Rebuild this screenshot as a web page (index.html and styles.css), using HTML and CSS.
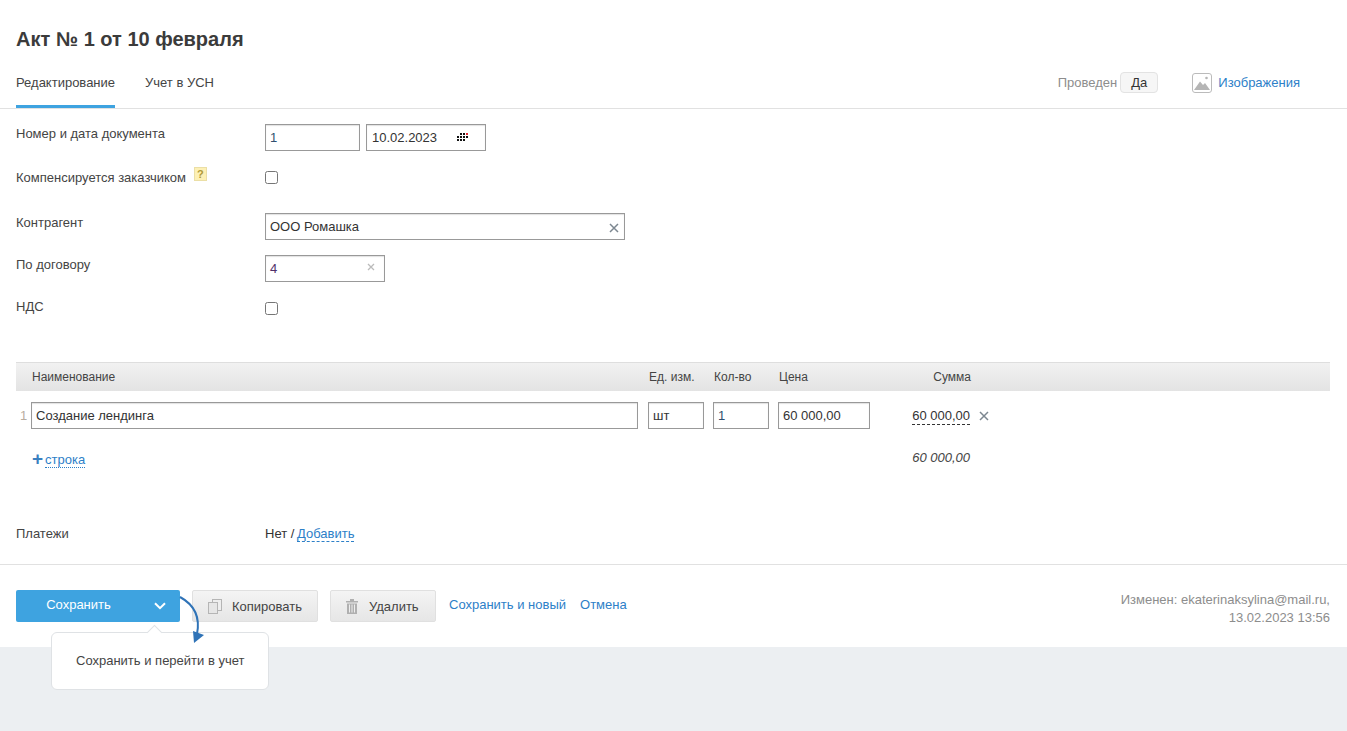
FILE: index.html
```html
<!DOCTYPE html>
<html lang="ru">
<head>
<meta charset="utf-8">
<title>Акт № 1 от 10 февраля</title>
<link rel="stylesheet" href="styles.css">
</head>
<body>
<div class="page">
  <main class="sheet">
    <header class="head">
      <h1 class="title">Акт № 1 от 10 февраля</h1>
      <nav class="tabs">
        <a class="tab tab-active">Редактирование</a>
        <a class="tab">Учет в УСН</a>
        <div class="tabs-right">
          <span class="posted">Проведен</span>
          <span class="pill">Да</span>
          <svg class="img-icon" width="20" height="20" viewBox="0 0 20 20"><rect x=".5" y=".5" width="19" height="19" rx="2.5" fill="#fff" stroke="#bbb"/><path d="M2 17 L8 8.500 L11 12 L13 10 L18 17 Z" fill="#b5b5b5"/><circle cx="14.500" cy="5" r="1.300" fill="#b5b5b5"/></svg>
          <a class="link">Изображения</a>
        </div>
      </nav>
    </header>

    <section class="form">
      <div class="row row-first">
        <div class="label">Номер и дата документа</div>
        <div class="controls">
          <div class="field w-num">1</div>
          <div class="field w-date">10.02.2023
            <svg class="cal" width="11" height="8" viewBox="0 0 11 8"><g fill="#111"><rect x="3" width="2" height="2"/><rect x="6" width="2" height="2"/><rect y="3" width="2" height="2"/><rect x="3" y="3" width="2" height="2"/><rect x="6" y="3" width="2" height="2"/><rect x="9" y="3" width="2" height="2"/><rect y="6" width="2" height="2"/><rect x="3" y="6" width="2" height="2"/><rect x="6" y="6" width="2" height="2"/></g><rect x="9" width="2" height="2" fill="#e3262e"/></svg>
          </div>
        </div>
      </div>
      <div class="row row-check">
        <div class="label label-mid">Компенсируется заказчиком<span class="hint">?</span></div>
        <div class="controls"><input class="check" type="checkbox"></div>
      </div>
      <div class="row row-party">
        <div class="label">Контрагент</div>
        <div class="controls">
          <div class="field w-party">ООО Ромашка
            <svg class="clear" width="10" height="10" viewBox="0 0 10 10"><path d="M1 1 L9 9 M9 1 L1 9" stroke="#7c8790" stroke-width="1.500"/></svg>
          </div>
        </div>
      </div>
      <div class="row row-contract">
        <div class="label">По договору</div>
        <div class="controls">
          <div class="field w-contract">4
            <svg class="clear-small" width="8" height="8" viewBox="0 0 8 8"><path d="M1 1 L7 7 M7 1 L1 7" stroke="#bbb" stroke-width="1.300"/></svg>
          </div>
        </div>
      </div>
      <div class="row row-vat">
        <div class="label label-vat">НДС</div>
        <div class="controls"><input class="check" type="checkbox"></div>
      </div>
    </section>

    <section class="items">
      <div class="items-head">
        <div class="c-name">Наименование</div>
        <div class="c-unit">Ед. изм.</div>
        <div class="c-qty">Кол-во</div>
        <div class="c-price">Цена</div>
        <div class="c-sum">Сумма</div>
      </div>
      <div class="item">
        <div class="item-no">1</div>
        <div class="field w-name">Создание лендинга</div>
        <div class="field w-unit">шт</div>
        <div class="field w-qty">1</div>
        <div class="field w-price">60 000,00</div>
        <div class="item-sum"><span class="dashed">60 000,00</span></div>
        <svg class="item-x" width="10" height="10" viewBox="0 0 10 10"><path d="M1 1 L9 9 M9 1 L1 9" stroke="#7c8790" stroke-width="1.500"/></svg>
      </div>
      <div class="add-row">
        <a class="add"><span class="plus">+</span><span class="dotted">строка</span></a>
        <div class="total">60 000,00</div>
      </div>
    </section>

    <section class="payments">
      <div class="label-pay">Платежи</div>
      <div>Нет / <a class="link link-dashed">Добавить</a></div>
    </section>

    <footer class="foot">
      <div class="save">
        <span class="save-main">Сохранить</span>
        <svg class="chev" width="12" height="8" viewBox="0 0 12 8"><path d="M1 1.200 L6 6.200 L11 1.200" fill="none" stroke="#fff" stroke-width="2"/></svg>
      </div>
      <div class="btn btn-copy">
        <svg width="14" height="15" viewBox="0 0 14 15"><rect x="4.500" y=".5" width="9" height="11" fill="#eee" stroke="#b5b5b5"/><rect x=".5" y="3.500" width="9" height="11" fill="#e6e6e6" stroke="#b5b5b5"/></svg>
        Копировать
      </div>
      <div class="btn btn-del">
        <svg width="12" height="15" viewBox="0 0 12 15"><path d="M0 2h12v1.500H0zM4 0h4v2H4zM1 4.500h10V15H1z" fill="#b0b0b0"/><path d="M3.500 5.500v8M6 5.500v8M8.500 5.500v8" stroke="#eee"/></svg>
        Удалить
      </div>
      <a class="link foot-link">Сохранить и новый</a>
      <a class="link foot-link">Отмена</a>
      <div class="changed">Изменен: ekaterinaksylina@mail.ru,<br>13.02.2023 13:56</div>

      <div class="tip">
        <span class="tip-nub"></span>
        Сохранить и перейти в учет
      </div>
      <svg class="pointer" width="30" height="50" viewBox="0 0 30 50"><path d="M3 1 C14 7 24 18 20 38" fill="none" stroke="#2f73b7" stroke-width="2"/><path d="M16 35 L27 39 L17 47 Z" fill="#2f73b7"/></svg>
    </footer>
  </main>
</div>
</body>
</html>
```

FILE: styles.css
```css
* { box-sizing: border-box; }
html, body { margin: 0; padding: 0; }
body {
  font-family: "Liberation Sans", Arial, sans-serif;
  font-size: 13px;
  color: #333;
  background: #eceff2;
}
.page { min-height: 731px; overflow: hidden; }
.sheet { background: #fff; height: 647px; }

.head { border-bottom: 1px solid #e1e1e1; height: 109px; padding: 27px 0 0 16px; }
.title { margin: 0; font-size: 20px; line-height: 24px; font-weight: 700; color: #3b3b3b; }
.tabs { display: flex; margin-top: 18px; height: 39px; }
.tab { height: 39px; margin-right: 30px; padding-top: 5px; line-height: 18px; color: #444; }
.tab-active { border-bottom: 3px solid #3ea3e0; }
.tabs-right { margin-left: auto; display: flex; align-items: flex-start; padding-right: 47px; }
.posted { color: #8d8d8d; line-height: 18px; margin-top: 5px; margin-right: 3px; }
.pill { height: 21px; margin-top: 3px; padding: 0 10px; line-height: 19px; border: 1px solid #e3e3e3; border-radius: 4px; background: #f6f6f6; color: #333; }
.img-icon { margin: 4px 6px 0 34px; }
.link { color: #2d80c8; text-decoration: none; }
.tabs-right .link { line-height: 18px; margin-top: 5px; }

.form { padding-top: 15px; }
.row { display: flex; height: 27px; }
.row-check { margin-top: 13px; }
.row-party { margin-top: 22px; }
.row-contract { margin-top: 15px; }
.row-vat { margin-top: 13px; }
.label { width: 265px; padding: 1px 0 0 16px; line-height: 18px; color: #444; }
.label-mid { padding-top: 5px; }
.label-vat { padding-top: 3px; }
.controls { display: flex; align-items: center; gap: 6px; }
.hint {
  display: inline-block; width: 13px; height: 14px; margin-left: 8px; position: relative; top: -5px;
  background: #fdf0b5; border: 1px solid #ebdfa6; color: #b09a3a; font-size: 11px; font-weight: 700; line-height: 12px; text-align: center; vertical-align: middle;
}
.check { width: 13px; height: 13px; margin: 0; }

.field {
  position: relative; height: 27px; padding-left: 4px; line-height: 25px;
  border: 1px solid #999; box-shadow: inset 0 1px 1px #e2e2e2; background: #fff; color: #333; flex: none;
}
.w-num { width: 95px; color: #2f4f6f; }
.w-date { width: 120px; padding-left: 5px; }
.w-party { width: 360px; }
.w-contract { width: 120px; color: #50306a; }
.cal { position: absolute; left: 90px; top: 8px; }
.clear { position: absolute; right: 5px; top: 9px; }
.clear-small { position: absolute; right: 9px; top: 7px; }

.items { margin: 40px 17px 0 16px; }
.items-head {
  display: flex; height: 29px; line-height: 28px; font-size: 12px; color: #444;
  border-top: 1px solid #dedede; background: linear-gradient(#f1f1f1, #e3e3e3);
}
.c-name { width: 633px; padding-left: 16px; }
.c-unit { width: 65px; }
.c-qty { width: 65px; }
.c-price { width: 112px; }
.c-sum { width: 80px; text-align: right; }
.item { display: flex; align-items: center; height: 27px; margin-top: 11px; }
.item-no { width: 15px; padding-left: 4px; color: #b8ada0; }
.w-name { width: 607px; }
.w-unit { width: 56px; margin-left: 10px; }
.w-qty { width: 56px; margin-left: 9px; color: #2f4f6f; }
.w-price { width: 92px; margin-left: 9px; }
.item-sum { width: 100px; text-align: right; }
.dashed { border-bottom: 1px dashed #333; padding-bottom: 1px; }
.item-x { margin-left: 9px; }
.add-row { display: flex; margin-top: 21px; height: 20px; }
.add { width: 854px; padding-left: 16px; line-height: 18px; color: #2d80c8; margin-top: 1px; }
.plus { font-size: 19px; font-weight: 700; line-height: 16px; margin-right: 2px; vertical-align: -1px; color: #3a7fc0; }
.dotted { border-bottom: 1px dotted #2d80c8; }
.total { width: 100px; text-align: right; font-style: italic; color: #444; line-height: 16px; }

.payments { display: flex; margin-top: 55px; padding-bottom: 21px; border-bottom: 1px solid #e1e1e1; line-height: 18px; }
.label-pay { width: 265px; padding-left: 16px; color: #444; }
.link-dashed { border-bottom: 1px dashed #2d80c8; margin-left: -1px; }

.foot { position: relative; display: flex; align-items: flex-start; padding: 25px 17px 0 16px; }
.save {
  display: flex; align-items: center; width: 164px; height: 32px; border-radius: 2px; background: #3ea3e0; color: #fff; margin-right: 12px;
}
.save-main { width: 125px; text-align: center; line-height: 29px; height: 32px; }
.chev { margin-left: 13px; }
.btn {
  display: flex; align-items: center; height: 32px; border: 1px solid #e0e0e0; border-radius: 2px;
  background: linear-gradient(#f4f4f4, #e6e6e6); color: #444; margin-right: 12px; padding-left: 15px;
}
.btn-copy { width: 126px; gap: 10px; }
.btn-del { width: 106px; gap: 11px; margin-right: 13px; }
.foot-link { line-height: 29px; margin-right: 14px; }
.changed { margin-left: auto; text-align: right; color: #8d8d8d; line-height: 18px; margin-top: 1px; }

.tip {
  position: absolute; left: 51px; top: 67px; width: 218px; height: 58px; padding-left: 24px; line-height: 56px;
  background: #fff; border: 1px solid #dfe2e5; border-radius: 6px; color: #444;
}
.tip-nub {
  position: absolute; left: 97px; top: -6px; width: 11px; height: 11px; background: #fff;
  border-left: 1px solid #dfe2e5; border-top: 1px solid #dfe2e5; transform: rotate(45deg);
}
.pointer { position: absolute; left: 177px; top: 31px; }
```
